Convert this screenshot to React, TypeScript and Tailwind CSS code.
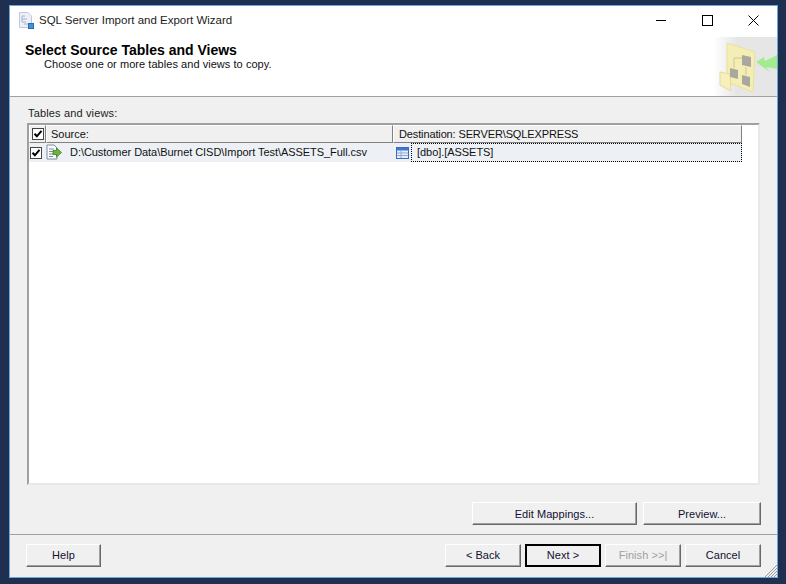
import React from "react";

const FONT = "font-['Liberation_Sans',Arial,sans-serif]";

function Btn({ label, w, disabled, primary, low }: { label: string; w: string; disabled?: boolean; primary?: boolean; low?: boolean }) {
  return (
    <div className={`${w} h-[23px] ${low ? "pt-[1px]" : ""} flex items-center justify-center text-[11px] tracking-[0.05px] bg-[#f0f0f0] ${primary ? "border-2 border-black" : "border border-t-white border-l-white border-r-[#696969] border-b-[#696969] shadow-[inset_-1px_-1px_0_#a0a0a0]"} ${disabled ? "text-[#a0a0a0]" : "text-[#101030]"}`}>
      {label}
    </div>
  );
}

function Check() {
  return (
    <div className="w-[12px] h-[12px] bg-white border border-[#444] flex items-center justify-center">
      <svg width="10" height="10" viewBox="0 0 10 10">
        <path d="M1.5 4.7 L3.9 7.3 L8.5 1.8" fill="none" stroke="#000" strokeWidth="2" />
      </svg>
    </div>
  );
}

function AppIcon() {
  return (
    <svg width="15" height="17" viewBox="0 0 15 17">
      <path d="M0.5 0.5 H9 L12.5 4 V15.5 H0.5 Z" fill="#eef0f8" stroke="#c0c8de" />
      <path d="M3 4 H6 M3 4 V10 H7 M3 7 H8 M5 12 H10" fill="none" stroke="#a8b2d0" />
      <rect x="9.5" y="11.5" width="5" height="5" fill="#3f94e0" stroke="#2a6cb0" />
    </svg>
  );
}

function WizardArt() {
  return (
    <div className="w-[67px] h-[59px] bg-gradient-to-r from-white from-[5%] to-[#e6e6e6] to-[40%] shrink-0">
      <svg width="67" height="59" viewBox="0 0 67 59" className="blur-[0.4px]">
        <path d="M46 25 L54 20 L55 24 L67 18 V32 L56 30 L60 35 Z" fill="#a3ec8e" />
        <path d="M17 6 L45 15 L43 55 L17 45 Z" fill="#f5eeb4" stroke="#e8dfa0" />
        <path d="M10 35 L20 37 L21 54 L10 48 Z" fill="#f7f0bc" stroke="#e3da9a" />
        <path d="M32 21 H24 V31 M36 30 V38" fill="none" stroke="#c9c6a0" />
        <path d="M32 18 L41 20 V30 L32 28 Z" fill="#a9a89e" />
        <path d="M20 31 L28 33 V42 L20 40 Z" fill="#a9a89e" />
        <path d="M32 38 L40 40 V50 L32 47 Z" fill="#a9a89e" />
      </svg>
    </div>
  );
}

function SourceIcon() {
  return (
    <svg width="16" height="17" viewBox="0 0 16 17">
      <path d="M1 1 H8 L11 4 V15 H1 Z" fill="#fff" stroke="#7d8aa0" />
      <path d="M3 5 H8 M3 7.5 H7 M3 10 H7 M3 12.5 H7" stroke="#7088a8" />
      <path d="M7 6.5 H10.5 V4 L15.5 8.5 L10.5 13 V10.5 H7 Z" fill="#6cb43c" stroke="#3f7f22" strokeWidth="0.8" />
    </svg>
  );
}

function TableIcon() {
  return (
    <svg width="13" height="12" viewBox="0 0 13 12">
      <rect x="0.5" y="0.5" width="12" height="11" fill="#e8eefa" stroke="#3c6cc0" />
      <rect x="1" y="1" width="11" height="2.5" fill="#3d78d0" />
      <path d="M1 6 H12 M1 8.5 H12 M5 3.5 V11" stroke="#8eaad8" />
    </svg>
  );
}

export default function App() {
  return (
    <div className={`${FONT} w-[786px] h-[584px] bg-[#1f2f50] pl-[9px] pt-[5px] overflow-hidden`}>
      <div className="relative w-[769px] h-[573px] border border-[#6ea6dc] flex flex-col bg-[#f0f0f0]">
        {/* Title bar */}
        <div className="h-[31px] bg-white flex items-center shrink-0 pb-[2px]">
          <div className="ml-[9px] w-[17px] flex"><AppIcon /></div>
          <span className="ml-[3px] text-[11.5px] text-[#222]">SQL Server Import and Export Wizard</span>
          <div className="ml-auto flex items-center text-black">
            <svg width="11" height="11" viewBox="0 0 11 11" className="mr-[35px]"><path d="M0 5.5 H10" stroke="#000" /></svg>
            <svg width="11" height="11" viewBox="0 0 11 11" className="mr-[35px]"><rect x="0.5" y="0.5" width="10" height="10" fill="none" stroke="#000" /></svg>
            <svg width="11" height="11" viewBox="0 0 11 11" className="mr-[18px]"><path d="M0.5 0.5 L10.5 10.5 M10.5 0.5 L0.5 10.5" stroke="#000" /></svg>
          </div>
        </div>
        {/* Header */}
        <div className="h-[60px] bg-white flex border-b border-[#a0a0a0] shrink-0">
          <div className="flex-1 pl-[15px] pt-[6px]">
            <div className="text-[14px] leading-[15px] font-bold text-black">Select Source Tables and Views</div>
            <div className="pl-[19px] text-[11px] leading-[13px] tracking-[0.05px] text-[#111]">Choose one or more tables and views to copy.</div>
          </div>
          <WizardArt />
        </div>
        {/* Body */}
        <div className="flex-1 flex flex-col px-[17px]">
          <div className="pt-[9px] h-[26px] pl-[1px] text-[11px] leading-[14px] tracking-[0.15px] text-[#222]">Tables and views:</div>
          <div className="w-[733px] h-[362px] bg-white border-2 border-[#a0a0a0] border-r-[#e8e8e8] border-b-[#e8e8e8] text-[11px] text-[#111]">
            <div className="h-[18px] flex bg-[#f0f0f0]">
              <div className="w-[17px] flex items-center justify-center border border-white border-r-[#808080] border-b-[#808080]"><Check /></div>
              <div className="w-[347px] border border-white border-r-[#808080] border-b-[#808080] pl-[4px] flex items-center">Source:</div>
              <div className="w-[349px] border border-white border-r-[#808080] border-b-[#808080] pl-[5px] flex items-center tracking-[-0.13px]">Destination: SERVER\SQLEXPRESS</div>
              <div className="flex-1 bg-white" />
            </div>
            <div className="h-[19px] flex items-center">
              <div className="w-[364px] h-full bg-[#edf1f6] flex items-center">
                <div className="pl-[1px] flex w-[17px]"><Check /></div>
                <div className="flex"><SourceIcon /></div>
                <span className="ml-[8px] tracking-[-0.055px]">D:\Customer Data\Burnet CISD\Import Test\ASSETS_Full.csv</span>
              </div>
              <div className="w-[349px] h-full bg-[#edf1f6] flex items-center">
                <div className="pl-[3px] flex"><TableIcon /></div>
                <div className="ml-[2px] flex-1 h-full flex items-center pl-[5px] border border-dotted border-black tracking-[-0.05px]">[dbo].[ASSETS]</div>
              </div>
            </div>
          </div>
          <div className="flex justify-end gap-[6px] mt-[17px] mr-[-1px]">
            <Btn label="Edit Mappings..." w="w-[165px]" low />
            <Btn label="Preview..." w="w-[118px]" low />
          </div>
        </div>
        {/* Footer */}
        <div className="h-[43px] border-t border-[#a0a0a0] shrink-0 flex items-start pt-[9px] pl-[16px] pr-[16px] gap-[4px]">
          <Btn label="Help" w="w-[75px]" />
          <div className="flex-1" />
          <Btn label="< Back" w="w-[76px]" />
          <Btn label="Next >" w="w-[76px]" primary />
          <Btn label="Finish >>|" w="w-[76px]" disabled />
          <Btn label="Cancel" w="w-[76px]" />
        </div>
        <svg width="13" height="13" viewBox="0 0 13 13" className="absolute right-0 bottom-0">
          <path d="M1 13 L13 1 M4 13 L13 4 M7 13 L13 7 M10 13 L13 10" stroke="#999" />
        </svg>
      </div>
    </div>
  );
}
